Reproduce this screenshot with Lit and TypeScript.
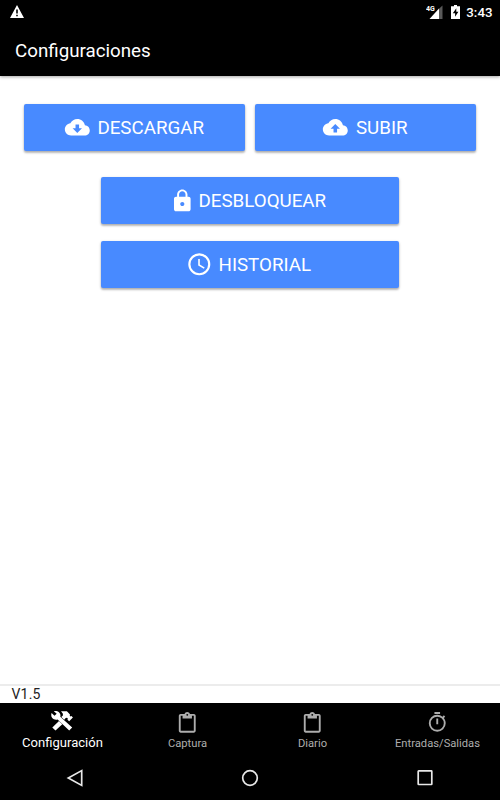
import { LitElement, html, css, svg } from "lit";
import { customElement, property } from "lit/decorators.js";

const icons: Record<string, { box: string; body: unknown }> = {
  download: {
    box: "0 0 512 512",
    body: svg`<path fill-rule="evenodd" d="M403 217C389 148 329 96 256 96c-58 0-108 33-133 81C63 183 16 234 16 296c0 66 54 120 120 120h260c55 0 100-45 100-100 0-53-41-96-93-99zM222 276v-76h68v76h56L256 366 166 276z"/>`,
  },
  upload: {
    box: "0 0 512 512",
    body: svg`<path fill-rule="evenodd" d="M403 217C389 148 329 96 256 96c-58 0-108 33-133 81C63 183 16 234 16 296c0 66 54 120 120 120h260c55 0 100-45 100-100 0-53-41-96-93-99zM290 284v70h-68v-70h-56L256 194 346 284z"/>`,
  },
  lock: {
    box: "0 0 512 512",
    body: svg`<path fill-rule="evenodd" d="M376 186h-20v-40c0-55-45-100-100-100S156 91 156 146v40h-20c-22 0-40 18-40 40v200c0 22 18 40 40 40h240c22 0 40-18 40-40V226c0-22-18-40-40-40zM256 368c-22 0-40-18-40-40s18-40 40-40 40 18 40 40-18 40-40 40zm62-182H194v-40c0-34 28-62 62-62s62 28 62 62v40z"/>`,
  },
  clock: {
    box: "0 0 512 512",
    body: svg`<path fill-rule="evenodd" d="M256 44a212 212 0 1 0 0 424 212 212 0 0 0 0-424zm0 382a170 170 0 1 1 0-340 170 170 0 0 1 0 340z"/><path d="M266 152h-31v125l109 65 16-26-94-55z"/>`,
  },
  tools: {
    box: "0 0 22 20",
    body: svg`<path d="M.6 2 3.500 4.800 5.700 2.700 2.900.2C5.300-.5 7.700.3 8.900 2.400c.6 1.100.7 2.300.4 3.300L21.200 16.400 18.200 19.400 6.600 8.600C4.600 9.200 2.500 8.600 1.300 7.100.1 5.700 0 3.600.6 2z"/><path d="M10 .3h5.900l3.100 3.100-.3 1.200.8.8 1-.4 1.400 1.400-3.700 3.900-1.700-1.600.3-1.200-.8-.8-1.300.3-1.500 1.700-2.900-2.600 1.600-1.700V2.700z"/><path d="M8 10 11.300 13.200 4.500 19.500 1.300 16.500z"/>`,
  },
  clipboard: {
    box: "0 0 24 24",
    body: svg`<path d="M19 2h-4.180C14.400.84 13.300 0 12 0S9.600.84 9.180 2H5c-1.100 0-2 .9-2 2v16c0 1.100.9 2 2 2h14c1.100 0 2-.9 2-2V4c0-1.100-.9-2-2-2zm-7 0a1 1 0 1 1 0 2 1 1 0 0 1 0-2zm7 18H5V4h2v3h10V4h2z"/>`,
  },
  timer: {
    box: "0 1 24 24",
    body: svg`<path d="M15 1H9v2h6V1zm-4 13h2V8h-2v6zm8.030-6.610 1.420-1.420c-.43-.51-.9-.99-1.410-1.410l-1.420 1.420A8.960 8.960 0 0 0 12 4a9 9 0 1 0 9 9c0-2.120-.74-4.070-1.970-5.610zM12 20a7 7 0 1 1 0-14 7 7 0 0 1 0 14z"/>`,
  },
  warning: {
    box: "0 0 14 13",
    body: svg`<path fill-rule="evenodd" d="M7 0 14 13H0zM6.200 4.500v4h1.600v-4zm0 5.200v1.600h1.600V9.700z"/>`,
  },
  signal: {
    box: "0 0 17 14",
    body: svg`<path opacity=".35" d="M13 3.800 16.500.500V14H13z"/><path d="M13 3.500V14H3.500z"/><text class="net" x="0" y="6.300">4G</text>`,
  },
  battery: {
    box: "0 0 9 14",
    body: svg`<path fill-rule="evenodd" d="M3 0h3v1.300h3V14H0V1.300h3zM5.300 3.300 1.800 8.200h2.300v3.600l3.300-5H5.300z"/>`,
  },
  back: { box: "0 0 18 18", body: svg`<path class="line" d="M15.700 1.600v14.800L2.300 9z"/>` },
  home: { box: "0 0 18 18", body: svg`<circle class="line" cx="9" cy="9" r="7.300"/>` },
  recent: { box: "0 0 18 18", body: svg`<rect class="line" x="2.200" y="1.900" width="13.600" height="13.600" rx=".5"/>` },
};

@customElement("ui-icon")
export class UiIcon extends LitElement {
  @property() name = "";

  static styles = css`
    :host { display: block; flex: none; }
    svg { display: block; width: 100%; height: 100%; fill: currentColor; }
    .line { fill: none; stroke: currentColor; stroke-width: 1.7; }
    .net { font: 700 7px Roboto, sans-serif; }
  `;

  render() {
    const icon = icons[this.name];
    return icon ? html`<svg viewBox=${icon.box} aria-hidden="true">${icon.body}</svg>` : null;
  }
}

@customElement("app-root")
export class AppRoot extends LitElement {
  static styles = css`
    * { box-sizing: border-box; }
    :host {
      display: flex; flex-direction: column; height: 100vh;
      background: #fff; color: #fff; font-family: Roboto, sans-serif; overflow: hidden;
    }
    .status {
      display: flex; align-items: center; height: 24px; flex: none;
      padding: 0 7.5px 0 10px; background: #000;
    }
    .warning { width: 14px; height: 13px; margin: 0 auto 1px 0; }
    .signal { width: 17px; height: 14px; }
    .battery { width: 9px; height: 14px; margin: 0 6px 0 8px; }
    .time { font-size: 13.3px; font-weight: 500; line-height: 24px; padding-top: 1px; }
    .header {
      height: 52px; flex: none; padding-left: 15px; background: #000;
      font-size: 18.75px; line-height: 54px; box-shadow: 0 1px 3px rgba(0, 0, 0, .35);
    }
    .title { margin: 0; font: inherit; font-weight: 400; }
    .content { flex: 1; padding: 28px 24px 0; display: flex; flex-direction: column; align-items: center; }
    .pair {
      display: grid; grid-template-columns: 1fr 1fr; gap: 9.5px;
      width: 100%; padding-left: .4px; margin-bottom: 26px;
    }
    .button {
      display: flex; align-items: center; justify-content: center; gap: 7px;
      height: 47px; width: 298px; padding: 0 1px 0 0; border: 0; border-radius: 2px;
      background: #488aff; color: #fff; font: 400 18.75px Roboto, sans-serif;
      box-shadow: 0 2px 2px rgba(0, 0, 0, .18), 0 1px 3px rgba(0, 0, 0, .22);
    }
    .pair .button { width: 100%; }
    .glyph { width: 26.6px; height: 26.6px; }
    .download { margin-left: -1px; }
    .lock { margin: 0 -4px; }
    .clock { margin: 0 -1px 0 -2px; }
    .gap { height: 17px; flex: none; }
    .version {
      height: 19px; flex: none; border-top: 2px solid #ececec; padding-left: 11.5px;
      color: #222; font-size: 14px; line-height: 17px; letter-spacing: .2px;
    }
    .tabs { display: grid; grid-template-columns: repeat(4, 1fr); height: 52px; flex: none; background: #000; }
    .tab {
      display: flex; flex-direction: column; align-items: center;
      padding-top: 9px; color: #adadad; font-size: 11.2px; line-height: 16px;
    }
    .tab ui-icon { width: 22.5px; height: 22.5px; margin: 0 0 1px .3px; }
    .tab.active { color: #fff; font-size: 13.05px; padding-top: 8px; }
    .tab.active ui-icon { width: 22px; height: 20px; margin: 0 1px 4px 0; }
    .system {
      display: flex; align-items: center; justify-content: space-between; height: 45px; flex: none;
      padding: 0 66px; background: #000; color: #e8e8e8;
    }
    .system ui-icon { width: 18px; height: 18px; }
  `;

  private button(icon: string, label: string) {
    return html`<button class="button"><ui-icon class="glyph ${icon}" name=${icon}></ui-icon><span>${label}</span></button>`;
  }

  private tab(icon: string, label: string, active = false) {
    return html`<div class="tab ${active ? "active" : ""}"><ui-icon name=${icon}></ui-icon><span>${label}</span></div>`;
  }

  render() {
    return html`
      <div class="status">
        <ui-icon class="warning" name="warning"></ui-icon>
        <ui-icon class="signal" name="signal"></ui-icon>
        <ui-icon class="battery" name="battery"></ui-icon>
        <span class="time">3:43</span>
      </div>
      <header class="header"><h1 class="title">Configuraciones</h1></header>
      <main class="content">
        <div class="pair">${this.button("download", "DESCARGAR")}${this.button("upload", "SUBIR")}</div>
        ${this.button("lock", "DESBLOQUEAR")}
        <div class="gap"></div>
        ${this.button("clock", "HISTORIAL")}
      </main>
      <div class="version">V1.5</div>
      <nav class="tabs">
        ${this.tab("tools", "Configuración", true)}
        ${this.tab("clipboard", "Captura")}
        ${this.tab("clipboard", "Diario")}
        ${this.tab("timer", "Entradas/Salidas")}
      </nav>
      <div class="system">
        <ui-icon name="back"></ui-icon>
        <ui-icon name="home"></ui-icon>
        <ui-icon name="recent"></ui-icon>
      </div>
    `;
  }
}
